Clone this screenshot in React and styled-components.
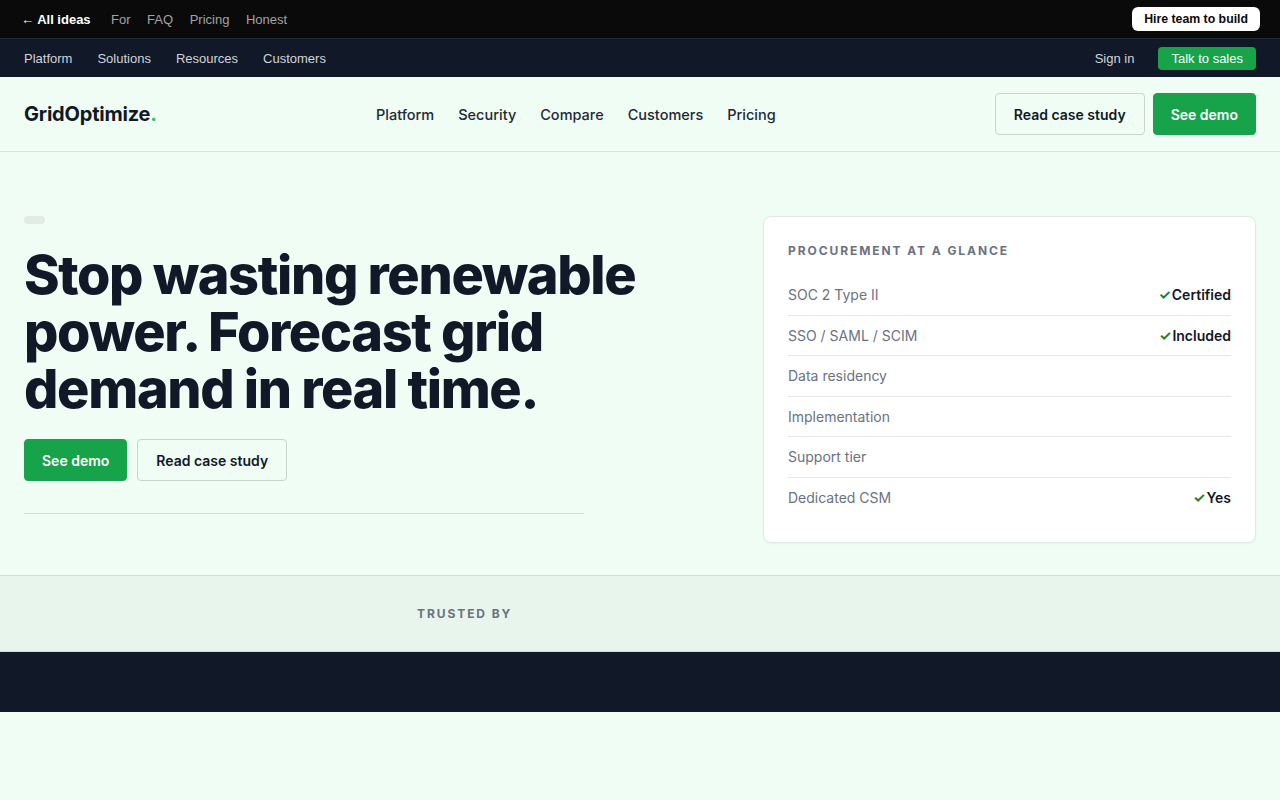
import React from "react";
import styled, { createGlobalStyle } from "styled-components";

const GlobalStyle = createGlobalStyle`
  * { box-sizing: border-box; }
  body {
    margin: 0;
    background: #f0fdf4;
    font-family: Inter, "Liberation Sans", sans-serif;
    color: #111827;
  }
`;

const TopBar = styled.div`
  height: 39px;
  background: #0a0a0a;
  border-bottom: 1px solid #1f2937;
  display: flex;
  align-items: center;
  justify-content: space-between;
  padding: 0 20px 0 21px;
  font-family: "Liberation Sans", Arial, sans-serif;
  font-size: 13px;
`;

const TopLinks = styled.div`
  display: flex;
  align-items: center;
  gap: 16.5px;
`;

const Back = styled.a`
  color: #fff;
  font-weight: 700;
  margin-right: 4px;
`;

const TopLink = styled.a`
  color: #a3a3a3;
`;

const HireButton = styled.a`
  background: #fff;
  color: #0a0a0a;
  font-weight: 700;
  font-size: 12.3px;
  border-radius: 6px;
  padding: 5px 12px;
  line-height: 14px;
`;

const SubBar = styled.div`
  height: 38px;
  background: #111827;
  display: flex;
  align-items: center;
  justify-content: space-between;
  padding: 0 24px;
  font-family: "Liberation Sans", Arial, sans-serif;
  font-size: 13px;
`;

const SubLinks = styled.div`
  display: flex;
  align-items: center;
  gap: ${({ $gap }) => $gap || 25}px;
`;

const SubLink = styled.a`
  color: #d1d5db;
`;

const SalesButton = styled.a`
  background: #16a34a;
  color: #fff;
  border-radius: 4px;
  padding: 5px 13px;
  line-height: 13px;
`;

const Header = styled.header`
  height: 75px;
  border-bottom: 1px solid #dbe5de;
  display: flex;
  justify-content: space-between;
  align-items: center;
  padding: 0 24px;
`;

const Logo = styled.div`
  font-size: 20px;
  font-weight: 700;
  letter-spacing: -0.01em;
  color: #111827;
  span { color: #22c55e; }
`;

const Nav = styled.nav`
  display: flex;
  gap: 24px;
  font-size: 14.5px;
  font-weight: 500;
  color: #1f2937;
`;

const Actions = styled.div`
  display: flex;
  gap: 8px;
`;

const Button = styled.a`
  display: inline-flex;
  align-items: center;
  height: 42px;
  padding: 0 ${({ $primary }) => ($primary ? 17 : 18)}px;
  border-radius: 4px;
  font-size: 14px;
  font-weight: 600;
  background: ${({ $primary }) => ($primary ? "#16a34a" : "transparent")};
  color: ${({ $primary }) => ($primary ? "#fff" : "#111827")};
  border: 1px solid ${({ $primary }) => ($primary ? "#16a34a" : "#cbd5d0")};
`;

const Hero = styled.section`
  display: grid;
  grid-template-columns: 1fr 493px;
  gap: 40px;
  padding: 64px 24px 32px;
  height: 423px;
`;

const Left = styled.div``;

const Pill = styled.div`
  width: 21px;
  height: 8px;
  border-radius: 4px;
  background: #e2ebe5;
  margin-bottom: 22px;
`;

const Headline = styled.h1`
  margin: 0;
  font-size: 54px;
  line-height: 57px;
  font-weight: 800;
  letter-spacing: -0.025em;
  color: #111827;
  max-width: 640px;
`;

const HeroButtons = styled.div`
  display: flex;
  gap: 10px;
  margin-top: 22px;
`;

const Divider = styled.hr`
  width: 560px;
  margin: 32px 0 0;
  border: 0;
  border-top: 1px solid #d6e0d9;
`;

const Card = styled.div`
  background: #fff;
  border: 1px solid #e2e8e4;
  border-radius: 8px;
  padding: 26px 24px 24px;
  height: 327px;
  box-shadow: 0 1px 2px rgba(0, 0, 0, 0.04);
`;

const CardTitle = styled.div`
  font-size: 12px;
  font-weight: 700;
  letter-spacing: 0.16em;
  color: #6b7280;
  margin-bottom: 16px;
`;

const Row = styled.div`
  display: flex;
  justify-content: space-between;
  align-items: center;
  height: 40.5px;
  font-size: 14px;
  border-top: 1px solid ${({ $first }) => ($first ? "transparent" : "#e5e7eb")};
`;

const Label = styled.span`
  color: #6b7280;
`;

const Value = styled.span`
  font-weight: 600;
  color: #111827;
  i {
    font-style: normal;
    font-weight: 700;
    color: #15803d;
    font-size: 14px;
    margin-right: 1px;
  }
`;

const Trusted = styled.section`
  height: 77px;
  background: #e8f5ec;
  border-top: 1px solid #d3ddd6;
  border-bottom: 1px solid #d3ddd6;
  display: flex;
  align-items: center;
  padding-left: 417px;
`;

const TrustedLabel = styled.div`
  font-size: 12px;
  font-weight: 700;
  letter-spacing: 0.16em;
  color: #6b7280;
`;

const Footer = styled.footer`
  height: 60px;
  background: #111827;
`;

const rows = [
  ["SOC 2 Type II", "Certified"],
  ["SSO / SAML / SCIM", "Included"],
  ["Data residency", ""],
  ["Implementation", ""],
  ["Support tier", ""],
  ["Dedicated CSM", "Yes"],
];

export default function App() {
  return (
    <>
      <GlobalStyle />
      <TopBar>
        <TopLinks>
          <Back>← All ideas</Back>
          <TopLink>For</TopLink>
          <TopLink>FAQ</TopLink>
          <TopLink>Pricing</TopLink>
          <TopLink>Honest</TopLink>
        </TopLinks>
        <HireButton>Hire team to build</HireButton>
      </TopBar>
      <SubBar>
        <SubLinks>
          <SubLink>Platform</SubLink>
          <SubLink>Solutions</SubLink>
          <SubLink>Resources</SubLink>
          <SubLink>Customers</SubLink>
        </SubLinks>
        <SubLinks $gap={24}>
          <SubLink>Sign in</SubLink>
          <SalesButton>Talk to sales</SalesButton>
        </SubLinks>
      </SubBar>
      <Header>
        <Logo>
          GridOptimize<span>.</span>
        </Logo>
        <Nav>
          <a>Platform</a>
          <a>Security</a>
          <a>Compare</a>
          <a>Customers</a>
          <a>Pricing</a>
        </Nav>
        <Actions>
          <Button>Read case study</Button>
          <Button $primary>See demo</Button>
        </Actions>
      </Header>
      <Hero>
        <Left>
          <Pill />
          <Headline>Stop wasting renewable power. Forecast grid demand in real time.</Headline>
          <HeroButtons>
            <Button $primary>See demo</Button>
            <Button>Read case study</Button>
          </HeroButtons>
          <Divider />
        </Left>
        <Card>
          <CardTitle>PROCUREMENT AT A GLANCE</CardTitle>
          {rows.map(([label, value], i) => (
            <Row key={label} $first={i === 0}>
              <Label>{label}</Label>
              {value && (
                <Value>
                  <i>✓</i>
                  {value}
                </Value>
              )}
            </Row>
          ))}
        </Card>
      </Hero>
      <Trusted>
        <TrustedLabel>TRUSTED BY</TrustedLabel>
      </Trusted>
      <Footer />
    </>
  );
}
